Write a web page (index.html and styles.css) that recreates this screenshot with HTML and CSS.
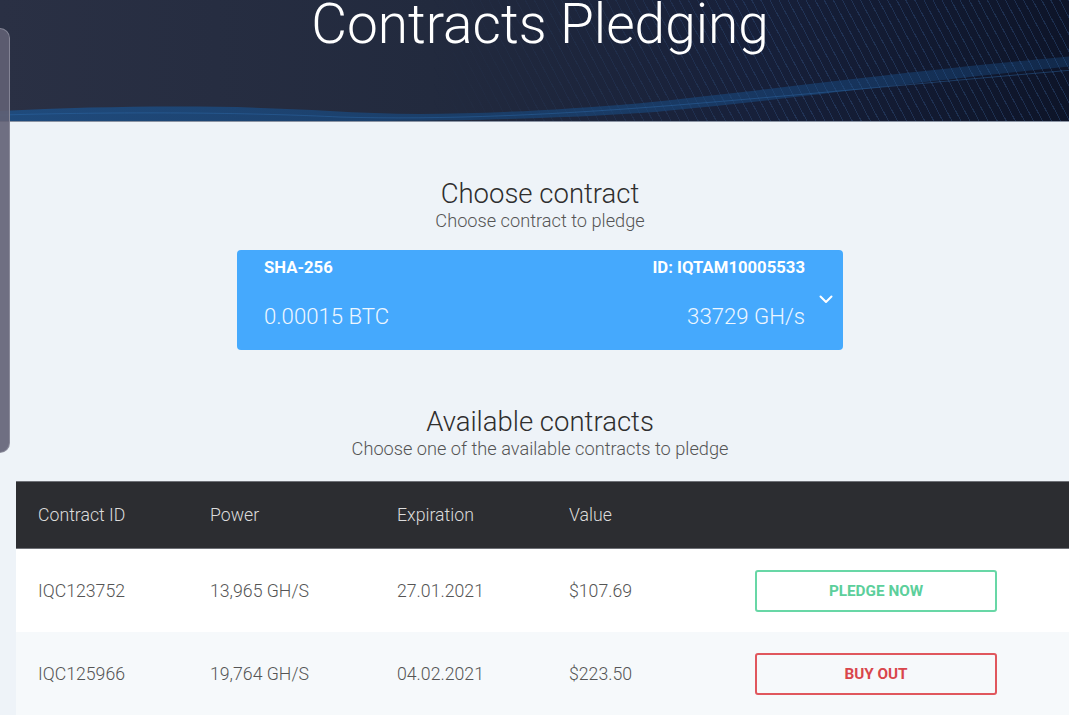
FILE: index.html
```html
<!DOCTYPE html>
<html lang="en">

<head>
  <meta charset="UTF-8">
  <meta name="viewport" content="width=device-width, initial-scale=1.0">
  <title>Contracts Pledging</title>
  <link rel="stylesheet" href="styles.css">
</head>

<body>
  <!-- side drawer handle -->
  <div class="drawer-tab"></div>

  <div class="page">
    <header class="hero">
      <svg class="hero-wave" viewBox="0 0 1080 122" preserveAspectRatio="none">
        <defs>
          <linearGradient id="waveFill" x1="0" y1="0" x2="1" y2="0">
            <stop offset="0" stop-color="#1d4f86" stop-opacity="0.85" />
            <stop offset="0.45" stop-color="#17487e" stop-opacity="0.65" />
            <stop offset="1" stop-color="#1b5898" stop-opacity="0.3" />
          </linearGradient>
        </defs>
        <path d="M0 112 C120 106 240 106 330 112 C420 118 520 114 640 104 C760 92 900 72 1080 56 L1080 66 C900 84 760 104 640 114 C520 122 400 122 330 122 L0 122 Z" fill="url(#waveFill)" />
        <path d="M0 116 C140 112 260 114 340 118 C440 121 560 116 700 104 C820 94 940 82 1080 70" fill="none" stroke="#2f6fb0" stroke-opacity="0.4" stroke-width="1" />
      </svg>
      <h1 class="hero-title">Contracts Pledging</h1>
    </header>

    <main class="content">
      <section class="block">
        <h2 class="block-title">Choose contract</h2>
        <p class="block-sub">Choose contract to pledge</p>

        <div class="contract-card">
          <div class="card-row card-top">
            <span>SHA-256</span>
            <span>ID: IQTAM10005533</span>
          </div>
          <div class="card-row card-values">
            <span>0.00015 BTC</span>
            <span>33729 GH/s</span>
          </div>
          <svg class="card-chevron" viewBox="0 0 14 9" width="14" height="9">
            <path d="M1.5 1.5 L7 7 L12.5 1.5" fill="none" stroke="#ffffff" stroke-width="2" stroke-linecap="round" stroke-linejoin="round" />
          </svg>
        </div>
      </section>

      <section class="block block-list">
        <h2 class="block-title">Available contracts</h2>
        <p class="block-sub">Choose one of the available contracts to pledge</p>
      </section>

      <div class="contracts-table">
        <div class="table-row table-head">
          <span>Contract ID</span>
          <span>Power</span>
          <span>Expiration</span>
          <span>Value</span>
          <span></span>
        </div>
        <div class="table-row">
          <span>IQC123752</span>
          <span>13,965 GH/S</span>
          <span>27.01.2021</span>
          <span>$107.69</span>
          <span><button class="btn btn-pledge">PLEDGE NOW</button></span>
        </div>
        <div class="table-row row-alt">
          <span>IQC125966</span>
          <span>19,764 GH/S</span>
          <span>04.02.2021</span>
          <span>$223.50</span>
          <span><button class="btn btn-buyout">BUY OUT</button></span>
        </div>
      </div>
    </main>
  </div>
</body>

</html>
```

FILE: styles.css
```css
* {
  box-sizing: border-box;
  margin: 0;
  padding: 0;
}

body {
  background-color: #eef3f8;
  color: #333333;
  font-family: Roboto, "Liberation Sans", sans-serif;
  overflow: hidden;
}

.page {
  width: 1080px;
}

.drawer-tab {
  position: fixed;
  left: -12px;
  top: 28px;
  width: 22px;
  height: 425px;
  border-radius: 10px;
  background-color: rgba(96, 96, 116, 0.9);
  border: 1px solid rgba(150, 150, 165, 0.7);
  z-index: 5;
}

.hero {
  position: relative;
  height: 122px;
  background: linear-gradient(90deg, #2a3044 0%, #222a3e 40%, #17203a 70%, #0d1428 100%);
  overflow: hidden;
  border-bottom: 1px solid #8a93a3;
}

.hero::before {
  content: "";
  position: absolute;
  inset: 0;
  background: repeating-linear-gradient(62deg, rgba(70, 120, 185, 0.26) 0 1px, transparent 1px 8px);
  -webkit-mask-image: linear-gradient(90deg, transparent 40%, rgba(0, 0, 0, 0.9) 75%, #000 100%);
  mask-image: linear-gradient(90deg, transparent 40%, rgba(0, 0, 0, 0.9) 75%, #000 100%);
}

.hero-wave {
  position: absolute;
  left: 0;
  top: 0;
  width: 100%;
  height: 100%;
}

.hero-title {
  position: relative;
  text-align: center;
  color: #ffffff;
  font-weight: 300;
  font-size: 55px;
  line-height: 48px;
}

.content {
  padding-top: 56px;
}

.block {
  display: flex;
  flex-direction: column;
  align-items: center;
}

.block-title {
  font-weight: 300;
  font-size: 27.5px;
  line-height: 32px;
  color: #2e2e2e;
}

.block-sub {
  font-weight: 300;
  font-size: 18.2px;
  line-height: 21px;
  color: #555555;
}

.contract-card {
  position: relative;
  width: 606px;
  height: 100px;
  margin-top: 19px;
  padding: 8px 38px 0 27px;
  background-color: #45a9fd;
  border-radius: 4px;
  color: #ffffff;
}

.card-row {
  display: flex;
  justify-content: space-between;
}

.card-top {
  font-weight: 700;
  font-size: 16.7px;
  line-height: 20px;
}

.card-values {
  margin-top: 25px;
  font-weight: 300;
  font-size: 22.2px;
  line-height: 26px;
  color: #eef7ff;
}

.card-chevron {
  position: absolute;
  right: 10px;
  top: 45px;
}

.block-list {
  margin-top: 56px;
}

.contracts-table {
  margin: 22px 0 0 16px;
}

.table-row {
  display: grid;
  grid-template-columns: 172px 187px 172px 186px 1fr;
  align-items: center;
  height: 83px;
  padding-left: 22px;
  background-color: #ffffff;
  font-weight: 300;
  font-size: 17.7px;
  color: #555555;
}

.table-head {
  height: 68px;
  background-color: #2c2d31;
  border-top: 1px solid #6e7076;
  border-bottom: 1px solid #6e7076;
  color: #dcdcdc;
}

.row-alt {
  background-color: #f6f9fb;
}

.btn {
  display: block;
  width: 242px;
  height: 42px;
  border-radius: 3px;
  background-color: transparent;
  font-family: Roboto, "Liberation Sans", sans-serif;
  font-weight: 700;
  font-size: 15.3px;
  cursor: pointer;
}

.btn-pledge {
  border: 2px solid #68d7a6;
  color: #5ccf9b;
}

.btn-buyout {
  border: 2px solid #e0575d;
  color: #d9464c;
}
```
